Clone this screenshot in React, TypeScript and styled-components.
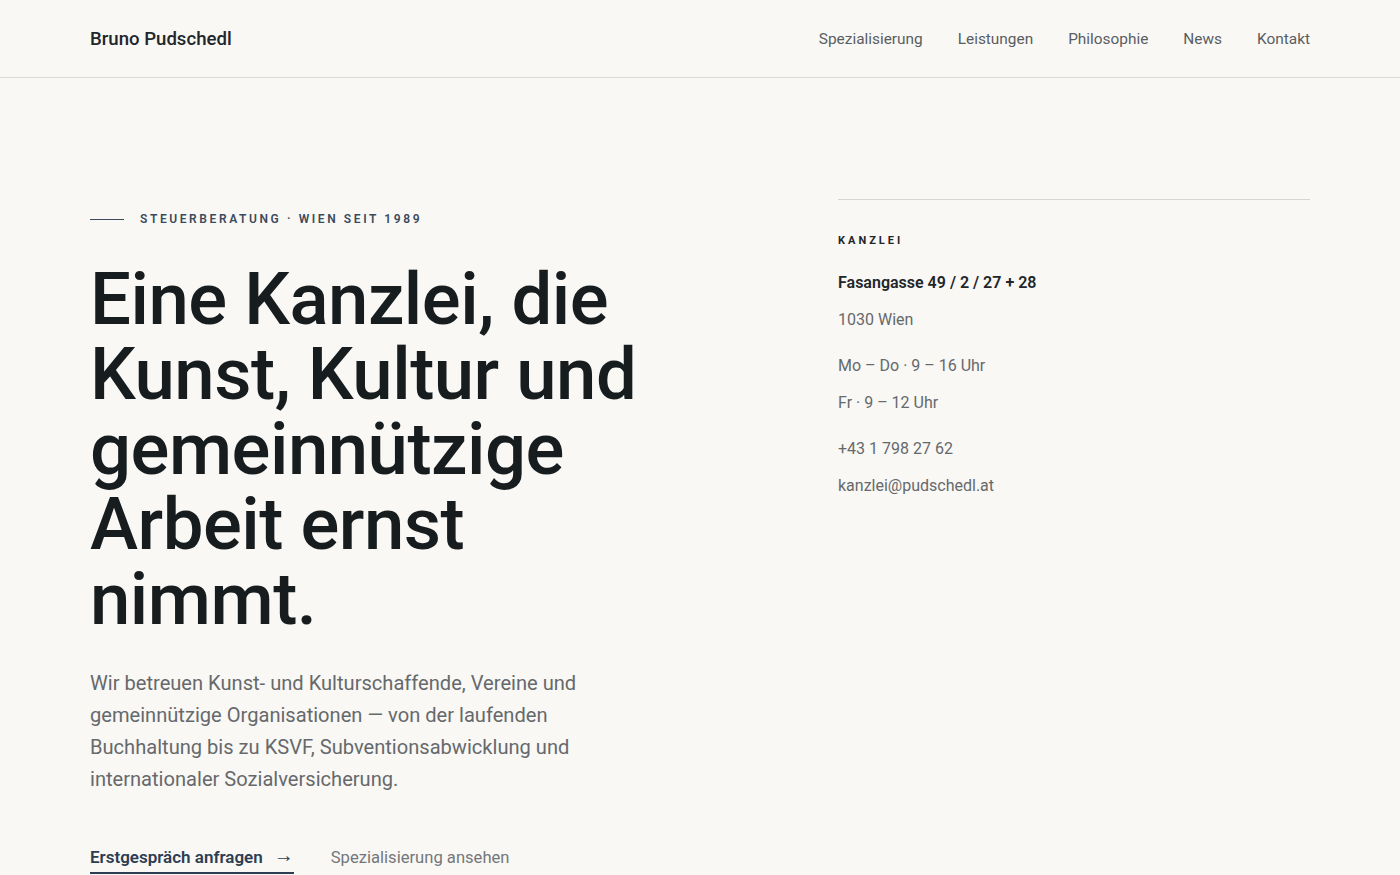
import React from "react";
import styled, { createGlobalStyle } from "styled-components";

const GlobalStyle = createGlobalStyle`
  * { box-sizing: border-box; }
  html, body { margin: 0; padding: 0; }
  body {
    background: #f9f8f5;
    font-family: Roboto, "Liberation Sans", sans-serif;
    color: #1a1f23;
    -webkit-font-smoothing: antialiased;
  }
  a { text-decoration: none; color: inherit; }
`;

const Header = styled.header`
  height: 78px;
  border-bottom: 1px solid #dcdad5;
`;

const HeaderInner = styled.div`
  width: 1220px;
  margin: 0 auto;
  height: 100%;
  display: flex;
  align-items: center;
  justify-content: space-between;
`;

const Brand = styled.a`
  font-size: 18.6px;
  font-weight: 500;
  color: #22262a;
`;

const Nav = styled.nav`
  display: flex;
  gap: 35px;
`;

const NavLink = styled.a`
  font-size: 15.4px;
  color: #5a5e62;
`;

const Hero = styled.main`
  width: 1220px;
  margin: 0 auto;
  padding-top: 121px;
  display: grid;
  grid-template-columns: 1fr 472px;
  gap: 60px;
`;

const Left = styled.div`
  padding-top: 13px;
`;

const Eyebrow = styled.div`
  display: flex;
  align-items: center;
  gap: 16px;
  font-size: 12px;
  font-weight: 600;
  letter-spacing: 2.6px;
  text-transform: uppercase;
  color: #3b4a5c;
`;

const EyebrowRule = styled.span`
  width: 34px;
  height: 1px;
  background: #3b4a5c;
`;

const Headline = styled.h1`
  margin: 36px 0 0;
  font-size: 72.5px;
  line-height: 75px;
  font-weight: 500;
  letter-spacing: -0.5px;
  color: #171c1f;
  max-width: 580px;
`;

const Lead = styled.p`
  margin: 30px 0 0;
  font-size: 20.1px;
  line-height: 32px;
  color: #66696c;
  max-width: 520px;
`;

const Actions = styled.div`
  display: flex;
  align-items: flex-start;
  gap: 37px;
  margin-top: 52px;
`;

const PrimaryAction = styled.a`
  font-size: 17px;
  font-weight: 600;
  color: #2c3d52;
  padding-bottom: 5px;
  border-bottom: 2px solid #2c3d52;
  display: inline-flex;
  align-items: center;
  gap: 11px;
`;

const Arrow = styled.span`
  font-size: 20px;
  line-height: 17px;
  margin-top: -3px;
`;

const SecondaryAction = styled.a`
  font-size: 16.6px;
  color: #74777a;
  line-height: 22px;
`;

const Card = styled.aside`
  border-top: 1px solid #d8d6d1;
  padding-top: 34px;
`;

const CardLabel = styled.div`
  font-size: 11px;
  font-weight: 700;
  letter-spacing: 3px;
  text-transform: uppercase;
  color: #22262a;
  margin-bottom: 25px;
`;

const InfoGroup = styled.div`
  display: flex;
  flex-direction: column;
  gap: 15px;
  & + & { margin-top: 24px; }
`;

const InfoLine = styled.div<{ $strong?: boolean }>`
  font-size: 16px;
  line-height: 22px;
  font-weight: ${(p) => (p.$strong ? 600 : 400)};
  color: ${(p) => (p.$strong ? "#22262a" : "#66696c")};
`;

export default function App() {
  return (
    <>
      <GlobalStyle />
      <Header>
        <HeaderInner>
          <Brand href="#">Bruno Pudschedl</Brand>
          <Nav>
            <NavLink href="#">Spezialisierung</NavLink>
            <NavLink href="#">Leistungen</NavLink>
            <NavLink href="#">Philosophie</NavLink>
            <NavLink href="#">News</NavLink>
            <NavLink href="#">Kontakt</NavLink>
          </Nav>
        </HeaderInner>
      </Header>
      <Hero>
        <Left>
          <Eyebrow>
            <EyebrowRule />
            Steuerberatung · Wien seit 1989
          </Eyebrow>
          <Headline>
            Eine Kanzlei, die Kunst, Kultur und gemeinnützige Arbeit ernst nimmt.
          </Headline>
          <Lead>
            Wir betreuen Kunst- und Kulturschaffende, Vereine und gemeinnützige
            Organisationen — von der laufenden Buchhaltung bis zu KSVF,
            Subventionsabwicklung und internationaler Sozialversicherung.
          </Lead>
          <Actions>
            <PrimaryAction href="#">
              Erstgespräch anfragen <Arrow>→</Arrow>
            </PrimaryAction>
            <SecondaryAction href="#">Spezialisierung ansehen</SecondaryAction>
          </Actions>
        </Left>
        <Card>
          <CardLabel>Kanzlei</CardLabel>
          <InfoGroup>
            <InfoLine $strong>Fasangasse 49 / 2 / 27 + 28</InfoLine>
            <InfoLine>1030 Wien</InfoLine>
          </InfoGroup>
          <InfoGroup>
            <InfoLine>Mo – Do · 9 – 16 Uhr</InfoLine>
            <InfoLine>Fr · 9 – 12 Uhr</InfoLine>
          </InfoGroup>
          <InfoGroup>
            <InfoLine>+43 1 798 27 62</InfoLine>
            <InfoLine>kanzlei@pudschedl.at</InfoLine>
          </InfoGroup>
        </Card>
      </Hero>
    </>
  );
}
